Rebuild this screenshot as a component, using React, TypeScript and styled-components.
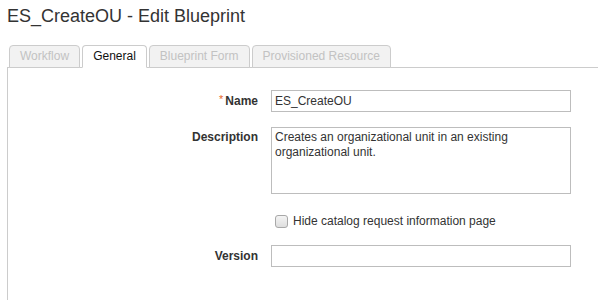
import styled, { createGlobalStyle } from "styled-components";

const GlobalStyle = createGlobalStyle`
  body {
    margin: 0;
    background: #fff;
    font-family: "Liberation Sans", Arial, sans-serif;
    color: #333;
    overflow: hidden;
  }
`;

const tabs = [
  { label: "Workflow", active: false },
  { label: "General", active: true },
  { label: "Blueprint Form", active: false },
  { label: "Provisioned Resource", active: false },
];

export default function App() {
  return (
    <>
      <GlobalStyle />
      <Page>
        <Title>ES_CreateOU - Edit Blueprint</Title>
        <TabList>
          {tabs.map((t) => (
            <Tab key={t.label} $active={t.active}>
              {t.label}
            </Tab>
          ))}
        </TabList>
        <Panel>
          <FormGrid>
            <Label>
              <Required>*</Required>Name
            </Label>
            <TextInput defaultValue="ES_CreateOU" />

            <Label $top>Description</Label>
            <TextArea defaultValue="Creates an organizational unit in an existing organizational unit." />

            <span />
            <CheckRow>
              <CheckBox type="checkbox" />
              Hide catalog request information page
            </CheckRow>

            <Label>Version</Label>
            <TextInput defaultValue="" />
          </FormGrid>
        </Panel>
      </Page>
    </>
  );
}

const Page = styled.div`
  padding-left: 7px;
`;

const Title = styled.h1`
  margin: 6px 0 0;
  font-size: 18px;
  line-height: 20px;
  font-weight: 400;
  color: #333;
`;

const TabList = styled.div`
  display: flex;
  margin-top: 19px;
  padding-left: 2px;
  border-bottom: 1px solid #ccc;
`;

const Tab = styled.div<{ $active?: boolean }>`
  height: 21px;
  line-height: 21px;
  padding: 0 10px;
  margin-right: 2px;
  margin-bottom: -1px;
  border: 1px solid #ccc;
  border-bottom-color: ${(p) => (p.$active ? "#fff" : "#ccc")};
  border-radius: 4px 4px 0 0;
  background: ${(p) => (p.$active ? "#fff" : "#f2f2f2")};
  color: ${(p) => (p.$active ? "#111" : "#c2c2c2")};
  font-size: 12px;
  font-weight: 400;
  white-space: nowrap;
`;

const Panel = styled.div`
  box-sizing: border-box;
  border-left: 1px solid #ccc;
  height: 232px;
  padding-top: 22px;
`;

const FormGrid = styled.div`
  display: grid;
  grid-template-columns: 250px 300px;
  column-gap: 13px;
  row-gap: 15px;
`;

const Label = styled.div<{ $top?: boolean }>`
  text-align: right;
  font-size: 12px;
  font-weight: 700;
  color: #333;
  line-height: ${(p) => (p.$top ? "15px" : "22px")};
  padding-top: ${(p) => (p.$top ? "3px" : "0")};
`;

const Required = styled.span`
  color: #e8682a;
  font-size: 11px;
  font-weight: 400;
  vertical-align: top;
  line-height: 18px;
  margin-right: 2px;
`;

const TextInput = styled.input`
  box-sizing: border-box;
  width: 300px;
  height: 22px;
  margin: 0;
  padding: 0 3px;
  border: 1px solid #bdbdbd;
  border-radius: 0;
  font-family: "Liberation Sans", Arial, sans-serif;
  font-size: 12px;
  color: #333;
  outline: none;
`;

const TextArea = styled.textarea`
  box-sizing: border-box;
  width: 300px;
  height: 67px;
  margin: 0;
  padding: 2px 3px;
  border: 1px solid #bdbdbd;
  border-radius: 0;
  resize: none;
  font-family: "Liberation Sans", Arial, sans-serif;
  font-size: 12px;
  line-height: 15px;
  color: #333;
  outline: none;
  overflow: hidden;
`;

const CheckRow = styled.label`
  display: flex;
  align-items: center;
  gap: 5px;
  padding: 5px 0 1px 4px;
  font-size: 12px;
  line-height: 15px;
  color: #333;
`;

const CheckBox = styled.input`
  appearance: none;
  box-sizing: border-box;
  width: 13px;
  height: 13px;
  margin: 0;
  border: 1px solid #a8a8a8;
  border-radius: 3px;
  background: linear-gradient(#f4f4f4, #dedede);
`;
